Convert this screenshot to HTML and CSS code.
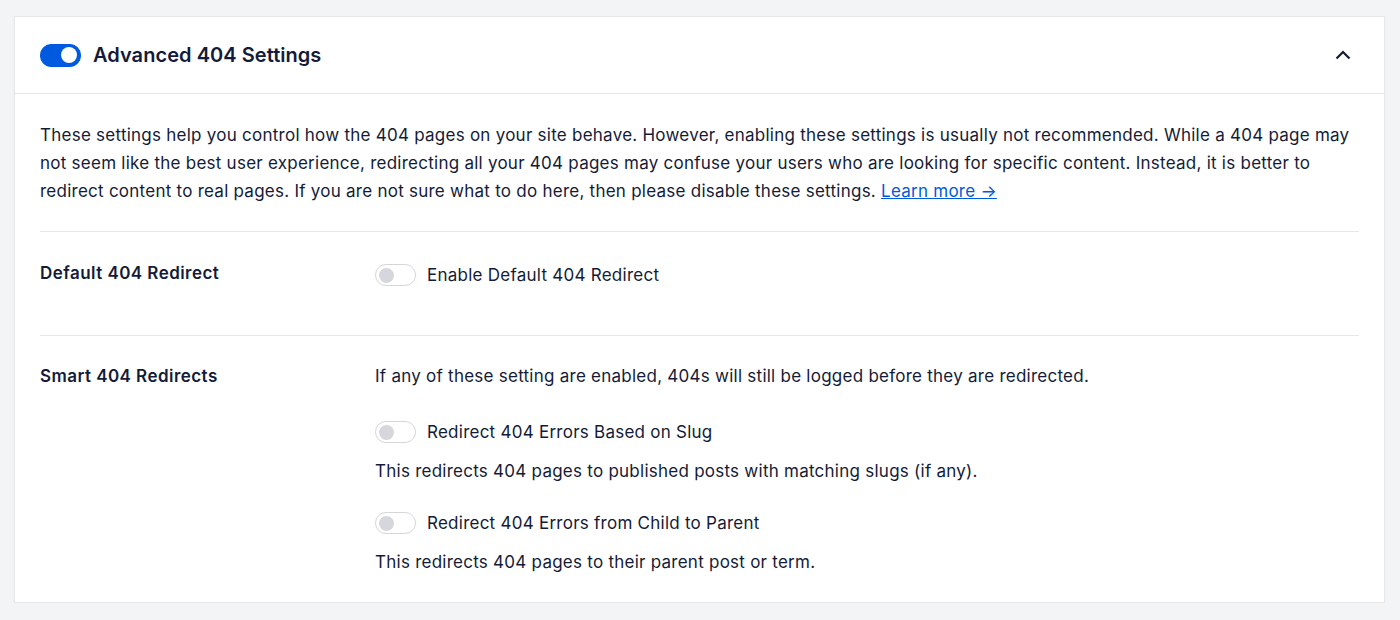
FILE: index.html
```html
<!DOCTYPE html>
<html>
<head>
<meta charset="utf-8">
<link rel="stylesheet" href="styles.css">
</head>
<body>
<div class="card">
  <div class="card-header">
    <div class="header-left">
      <span class="toggle toggle-on"><span class="knob"></span></span>
      <span class="title">Advanced 404 Settings</span>
    </div>
    <svg class="chevron" width="16" height="10" viewBox="0 0 16 10"><path d="M1.5 8.5 L8 2 L14.5 8.5" fill="none" stroke="#141b38" stroke-width="2.2"/></svg>
  </div>
  <div class="card-body">
    <p class="intro">These settings help you control how the 404 pages on your site behave. However, enabling these settings is usually not recommended. While a 404 page may not seem like the best user experience, redirecting all your 404 pages may confuse your users who are looking for specific content. Instead, it is better to redirect content to real pages. If you are not sure what to do here, then please disable these settings. <a href="#" class="link">Learn more →</a></p>
    <div class="row row-first">
      <div class="label">Default 404 Redirect</div>
      <div class="content">
        <div class="opt"><span class="toggle"><span class="knob"></span></span><span>Enable Default 404 Redirect</span></div>
      </div>
    </div>
    <div class="row row-last">
      <div class="label">Smart 404 Redirects</div>
      <div class="content">
        <div class="line">If any of these setting are enabled, 404s will still be logged before they are redirected.</div>
        <div class="opt opt-gap"><span class="toggle"><span class="knob"></span></span><span>Redirect 404 Errors Based on Slug</span></div>
        <div class="line desc">This redirects 404 pages to published posts with matching slugs (if any).</div>
        <div class="opt opt-gap2"><span class="toggle"><span class="knob"></span></span><span>Redirect 404 Errors from Child to Parent</span></div>
        <div class="line desc">This redirects 404 pages to their parent post or term.</div>
      </div>
    </div>
  </div>
</div>
</body>
</html>
```
FILE: styles.css
```css
html, body {
  margin: 0;
  padding: 0;
  background: #f3f4f5;
}
body {
  font-family: Inter, "Noto Sans", sans-serif;
  color: #141b38;
  padding: 16px 15px 0 14px;
}
.card {
  background: #fff;
  border: 1px solid #e8e8eb;
  box-shadow: 0 1px 2px rgba(0,0,0,0.04);
}
.card-header {
  height: 76px;
  display: flex;
  align-items: center;
  justify-content: space-between;
  padding: 0 33px 0 25px;
  border-bottom: 1px solid #e8e8eb;
}
.header-left {
  display: flex;
  align-items: center;
  gap: 12px;
}
.title {
  font-size: 20px;
  font-weight: 600;
  letter-spacing: 0.05px;
}
.chevron { display: block; margin-top: -1px; }
.toggle {
  box-sizing: border-box;
  width: 41px;
  height: 22px;
  border-radius: 11px;
  border: 1.5px solid #d5d6db;
  background: #fff;
  display: inline-flex;
  align-items: center;
  padding: 0 3px;
  flex: none;
}
.toggle .knob {
  width: 15px;
  height: 15px;
  border-radius: 50%;
  background: #d6d7dc;
}
.toggle-on {
  background: #005ae0;
  border-color: #005ae0;
  justify-content: flex-end;
  height: 23px;
}
.toggle-on .knob {
  background: #fff;
  width: 16px;
  height: 16px;
}
.card-body {
  padding: 27px 25px 28px 25px;
}
.intro {
  margin: 0;
  font-size: 17px;
  letter-spacing: 0.25px;
  line-height: 28px;
  padding-bottom: 26px;
  border-bottom: 1px solid #e8e8eb;
}
.link {
  color: #005ae0;
  text-decoration: underline;
}
.row {
  display: flex;
  font-size: 17px;
  letter-spacing: 0.25px;
  line-height: 24px;
}
.row-first {
  padding: 29px 0 48px;
  border-bottom: 1px solid #e8e8eb;
}
.row-last {
  padding-top: 28px;
}
.label {
  width: 335px;
  flex: none;
  font-weight: 600;
  letter-spacing: 0.45px;
}
.content { flex: 1; }
.opt {
  display: flex;
  align-items: center;
  gap: 11px;
}
.row-first .opt { margin-top: 2px; }
.opt-gap { margin-top: 32px; }
.opt-gap2 { margin-top: 28px; }
.desc { margin-top: 15px; }
```
